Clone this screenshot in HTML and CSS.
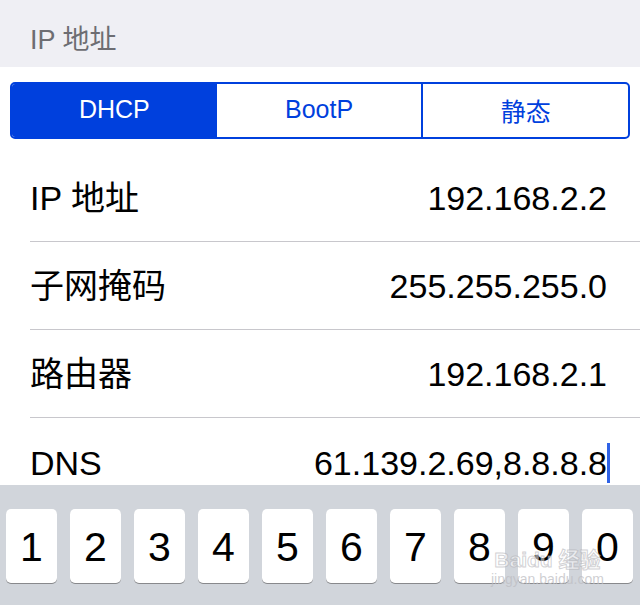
FILE: index.html
```html
<!DOCTYPE html>
<html>
<head>
<meta charset="utf-8">
<link rel="stylesheet" href="styles.css">
</head>
<body>
<div class="pagina">
    <div class="cabecalho">IP 地址</div>

    <div class="boxSegmento">
        <div class="segmento">
            <div class="seg segAtivo">DHCP</div>
            <div class="seg">BootP</div>
            <div class="seg segDivisor">静态</div>
        </div>
    </div>

    <div class="lista">
        <div class="linha">
            <div class="info">IP 地址</div>
            <div class="valor">192.168.2.2</div>
        </div>
        <div class="linha">
            <div class="info">子网掩码</div>
            <div class="valor">255.255.255.0</div>
        </div>
        <div class="linha">
            <div class="info">路由器</div>
            <div class="valor">192.168.2.1</div>
        </div>
        <div class="linha linhaUltima">
            <div class="info">DNS</div>
            <div class="valor">61.139.2.69,8.8.8.8<span class="cursor"></span></div>
        </div>
    </div>

    <div class="teclado">
        <div class="tecla">1</div>
        <div class="tecla">2</div>
        <div class="tecla">3</div>
        <div class="tecla">4</div>
        <div class="tecla">5</div>
        <div class="tecla">6</div>
        <div class="tecla">7</div>
        <div class="tecla">8</div>
        <div class="tecla">9</div>
        <div class="tecla">0</div>

        <div class="marca">
            <div class="marcaTopo">Baidu 经验</div>
            <div class="marcaUrl">jingyan.baidu.com</div>
        </div>
    </div>
</div>
</body>
</html>
```

FILE: styles.css
```css
html, body{
    margin: 0;
    padding: 0;
    background-color: #ffffff;
}

body{
    font-family: "Liberation Sans", "Noto Sans CJK SC", sans-serif;
    color: #000;
}

.pagina{
    width: 640px;
    height: 605px;
    display: flex;
    flex-direction: column;
    overflow: hidden;
}

.cabecalho{
    height: 67px;
    box-sizing: border-box;
    padding: 8px 0 0 30px;
    display: flex;
    align-items: center;
    background-color: #efeff4;
    color: #6d6d72;
    font-size: 27px;
}

.boxSegmento{
    padding: 15px 10px 15px 10px;
}

.segmento{
    display: flex;
    width: 620px;
    height: 57px;
    box-sizing: border-box;
    border: 2px solid #0040dd;
    border-radius: 5px;
    overflow: hidden;
}

.seg{
    flex: 1;
    display: flex;
    align-items: center;
    justify-content: center;
    color: #0040dd;
    font-size: 25px;
    padding-bottom: 2px;
}

.segAtivo{
    background-color: #0040dd;
    color: #fff;
}

.segDivisor{
    border-left: 2px solid #0040dd;
}

.lista{
    flex: 1;
    overflow: hidden;
}

.linha{
    height: 88px;
    box-sizing: border-box;
    margin-left: 30px;
    padding-right: 33px;
    border-bottom: 1px solid #c8c7cc;
    display: flex;
    align-items: center;
    justify-content: space-between;
    font-size: 34px;
    line-height: 40px;
    padding-top: 1px;
}

.linhaUltima{
    border-bottom: none;
}

.valor{
    display: flex;
    align-items: center;
}

.cursor{
    display: inline-block;
    width: 3px;
    height: 40px;
    margin-right: -3px;
    background-color: #2f62e6;
}

.teclado{
    position: relative;
    height: 120px;
    flex-shrink: 0;
    box-sizing: border-box;
    padding: 24px 7px 0 6px;
    display: flex;
    gap: 13px;
    background-color: #d1d5db;
}

.tecla{
    width: 51px;
    height: 74px;
    border-radius: 5px;
    background-color: #fff;
    box-shadow: 0 1px 0 #88898c;
    display: flex;
    align-items: center;
    justify-content: center;
    font-size: 41px;
    padding-top: 3px;
    box-sizing: border-box;
}

.marca{
    position: absolute;
    left: 491px;
    top: 64px;
    color: rgba(255, 255, 255, 0.6);
    text-align: center;
}

.marcaTopo{
    font-size: 21px;
    font-weight: bold;
    line-height: 22px;
    -webkit-text-stroke: 1px rgba(170, 170, 175, 0.55);
    color: rgba(255, 255, 255, 0.55);
}

.marcaUrl{
    font-size: 14px;
    line-height: 16px;
    color: rgba(190, 190, 195, 0.75);
}
```
